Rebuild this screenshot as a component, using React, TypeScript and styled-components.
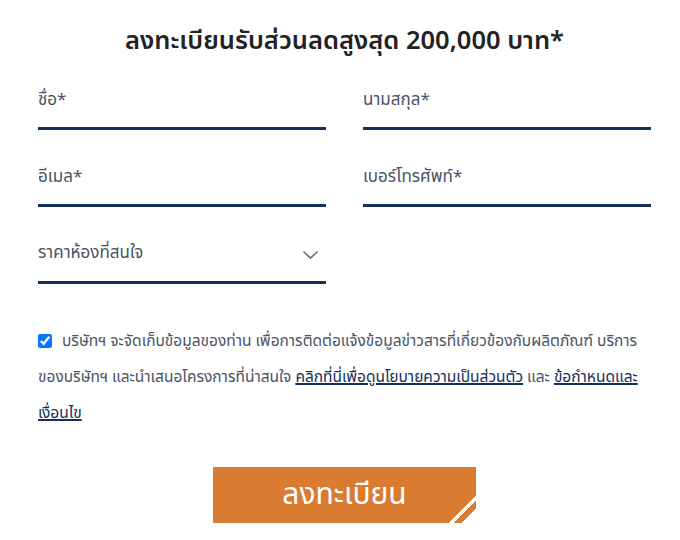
import * as React from 'react';
import styled, { createGlobalStyle } from 'styled-components';

const colors = {
  navy: '#15305a',
  text: '#4a5366',
  title: '#222222',
  orange: '#d97b30',
  white: '#ffffff',
};

const GlobalStyle = createGlobalStyle`
  body {
    margin: 0;
    background: ${colors.white};
    font-family: "Noto Sans", "Noto Sans Thai", "Liberation Sans", sans-serif;
  }
`;

const App = () => (
  <Page>
    <GlobalStyle/>
    <Title>ลงทะเบียนรับส่วนลดสูงสุด 200,000 บาท*</Title>

    <Fields>
      <TextInput placeholder="ชื่อ*"/>
      <TextInput placeholder="นามสกุล*"/>
      <TextInput placeholder="อีเมล*"/>
      <TextInput placeholder="เบอร์โทรศัพท์*"/>
      <SelectBox>
        <span>ราคาห้องที่สนใจ</span>
        <svg width="15" height="8" viewBox="0 0 15 8" fill="none">
          <path d="M1 1l6.5 6L14 1" stroke="#5b6b86" strokeWidth="1.6" strokeLinecap="round"/>
        </svg>
      </SelectBox>
    </Fields>

    <Consent>
      <Check type="checkbox" defaultChecked/>
      บริษัทฯ จะจัดเก็บข้อมูลของท่าน เพื่อการติดต่อแจ้งข้อมูลข่าวสารที่เกี่ยวข้องกับผลิตภัณฑ์ บริการ<br/>
      ของบริษัทฯ และนำเสนอโครงการที่น่าสนใจ <a href="#">คลิกที่นี่เพื่อดูนโยบายความเป็นส่วนตัว</a> และ <a href="#">ข้อกำหนดและ<br/>เงื่อนไข</a>
    </Consent>

    <Actions>
      <Submit type="button">ลงทะเบียน</Submit>
    </Actions>
  </Page>
);

const Page = styled.div`
  width: 613px;
  padding: 24px 0 0 38px;
`;

const Title = styled.h2`
  margin: 0 0 28px;
  text-align: center;
  font-size: 25.5px;
  line-height: 31px;
  font-weight: 600;
  color: ${colors.title};
`;

const Fields = styled.div`
  display: grid;
  grid-template-columns: 288px 288px;
  column-gap: 37px;
  row-gap: 30px;
`;

const TextInput = styled.input`
  box-sizing: border-box;
  height: 47px;
  padding: 0 0 14px;
  border: none;
  border-bottom: 3px solid ${colors.navy};
  font-family: inherit;
  font-size: 17px;
  line-height: 30px;
  color: ${colors.title};
  outline: none;

  &::placeholder {
    color: ${colors.text};
  }
`;

const SelectBox = styled.div`
  box-sizing: border-box;
  height: 47px;
  padding: 0 8px 12px 0;
  display: flex;
  align-items: center;
  justify-content: space-between;
  border-bottom: 3px solid ${colors.navy};
  font-size: 17px;
  color: ${colors.text};

  svg {
    margin-top: 4px;
  }
`;

const Consent = styled.p`
  margin: 38px 0 0;
  font-size: 15.5px;
  line-height: 36px;
  color: ${colors.text};
  white-space: nowrap;

  a {
    color: ${colors.navy};
    text-decoration: underline;
    text-decoration-thickness: 2px;
  }
`;

const Check = styled.input`
  width: 14px;
  height: 14px;
  margin: 0 10px 0 0;
  vertical-align: -2px;
  accent-color: #0a75ff;
`;

const Actions = styled.div`
  display: flex;
  justify-content: center;
  margin-top: 37px;
`;

const Submit = styled.button`
  position: relative;
  width: 263px;
  height: 56px;
  border: none;
  background: ${colors.orange};
  color: ${colors.white};
  font-family: inherit;
  font-size: 30px;
  cursor: pointer;

  &::after {
    content: '';
    position: absolute;
    right: 0;
    bottom: 0;
    width: 30px;
    height: 30px;
    background: linear-gradient(135deg, transparent 0 54%, ${colors.white} 54% 62%,
      transparent 62% 76%, ${colors.white} 76% 100%);
  }
`;

export default App;
